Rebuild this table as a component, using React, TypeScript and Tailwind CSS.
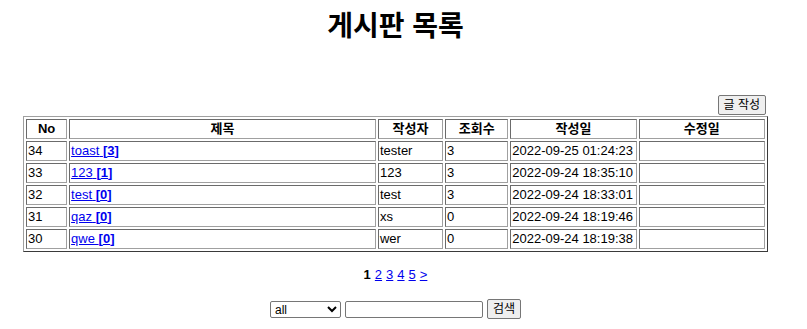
import React from 'react'

interface Post {
  no: number
  title: string
  comments: number
  writer: string
  hits: number
  created: string
  updated: string
}

const posts: Post[] = [
  { no: 34, title: 'toast', comments: 3, writer: 'tester', hits: 3, created: '2022-09-25 01:24:23', updated: '' },
  { no: 33, title: '123', comments: 1, writer: '123', hits: 3, created: '2022-09-24 18:35:10', updated: '' },
  { no: 32, title: 'test', comments: 0, writer: 'test', hits: 3, created: '2022-09-24 18:33:01', updated: '' },
  { no: 31, title: 'qaz', comments: 0, writer: 'xs', hits: 0, created: '2022-09-24 18:19:46', updated: '' },
  { no: 30, title: 'qwe', comments: 0, writer: 'wer', hits: 0, created: '2022-09-24 18:19:38', updated: '' },
]

// inset border for cells, like the old border="1" tables
const cell =
  'border border-t-[#6b6b6b] border-l-[#6b6b6b] border-b-[#a0a0a0] border-r-[#a0a0a0] p-px h-[20px] leading-[16px]'

export default function App(): JSX.Element {
  return (
    <div
      className="w-[791px] bg-white text-[13px] text-black flex flex-col items-center"
      style={{ fontFamily: '"Liberation Sans", "Noto Sans CJK KR", sans-serif' }}
    >
      <h1 className="mt-[11px] text-[28px] font-bold leading-[32px] text-center">게시판 목록</h1>

      <div className="w-[745px] mt-[52px] flex justify-end">
        <button
          type="button"
          className="mr-[2px] h-[20px] px-[5px] bg-[#efefef] border border-[#767676] rounded-[2px] text-[12px] leading-[16px]"
        >
          글 작성
        </button>
      </div>

      {/* list */}
      <table className="w-[745px] mt-px border-separate border-spacing-[2px] border border-t-[#a0a0a0] border-l-[#a0a0a0] border-b-[#3a3a3a] border-r-[#3a3a3a]">
        <thead>
          <tr>
            <th className={`${cell} w-[41px] font-bold`}>No</th>
            <th className={`${cell} w-[306px] font-bold`}>제목</th>
            <th className={`${cell} w-[65px] font-bold`}>작성자</th>
            <th className={`${cell} w-[63px] font-bold`}>조회수</th>
            <th className={`${cell} w-[126px] font-bold`}>작성일</th>
            <th className={`${cell} w-[126px] font-bold`}>수정일</th>
          </tr>
        </thead>
        <tbody>
          {posts.map((post) => (
            <tr key={post.no}>
              <td className={cell}>{post.no}</td>
              <td className={cell}>
                <a href="#" className="text-[#0000ee] underline">
                  {post.title} <b>[{post.comments}]</b>
                </a>
              </td>
              <td className={cell}>{post.writer}</td>
              <td className={cell}>{post.hits}</td>
              <td className={cell}>{post.created}</td>
              <td className={cell}>{post.updated}</td>
            </tr>
          ))}
        </tbody>
      </table>

      <div className="mt-[15px] leading-[16px] flex gap-[4px]">
        <b>1</b>
        {['2', '3', '4', '5', '>'].map((p) => (
          <a key={p} href="#" className="text-[#0000ee] underline">
            {p}
          </a>
        ))}
      </div>

      <form className="mt-[16px] flex items-center gap-[4px]">
        <select className="w-[71px] h-[17px] border border-[#767676] rounded-[2px] text-[12px] leading-[14px] bg-white">
          <option>all</option>
          <option>제목</option>
          <option>작성자</option>
        </select>
        <input type="text" className="w-[138px] h-[17px] border border-[#767676] rounded-[2px]" />
        <button
          type="button"
          className="h-[20px] px-[5px] bg-[#efefef] border border-[#767676] rounded-[2px] text-[12px] leading-[16px]"
        >
          검색
        </button>
      </form>
    </div>
  )
}
